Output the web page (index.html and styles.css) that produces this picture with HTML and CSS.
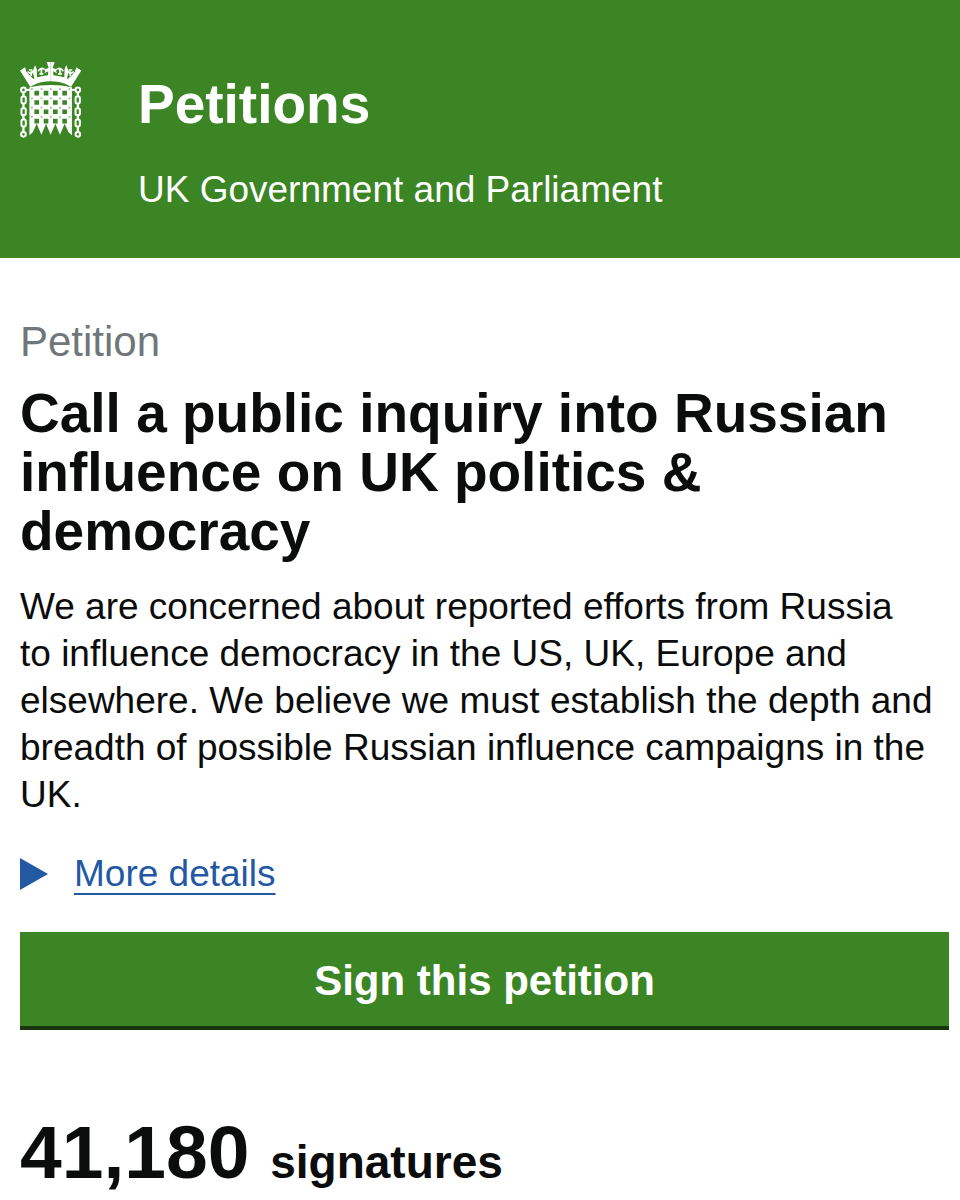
FILE: index.html
```html
<!DOCTYPE html>
<html lang="en">
<head>
  <meta charset="UTF-8">
  <meta name="viewport" content="width=device-width, initial-scale=1.0">
  <title>Petitions</title>
  <link rel="stylesheet" href="styles.css">
</head>
<body>
  <header class="header">
    <svg class="crest" viewBox="30 18 183 229" aria-hidden="true">
      <!-- crown -->
      <g id="crown-half">
        <path fill="#fff" d="M30 44l12-7 5 8 9 11 14 13q24-11 52-11v18q-30 0-53 12l-8 5z"/>
        <path fill="#fff" d="M30 44l15-10 3 10-9 6zM110 18h12v44h-9l2-16-12 6 5-13 8-4z"/>
        <path fill="#fff" d="M75 27l5 13 1 26-8 4-5-24z"/>
        <path fill="none" stroke="#fff" stroke-width="5" d="M52 47l11 7 8-10M63 46v14M84 46q10-14 18-6M94 40v14M88 54h12M103 40l8 4M57 42l10 0"/>
      </g>
      <use href="#crown-half" transform="matrix(-1 0 0 1 244 0)"/>
      <!-- portcullis -->
      <path fill="#fff" d="M58 94q64-14 128 0v145l-10-9-12-26-14 33-14-33-14 33-14-33-14 33-14-33-12 26-10 9z"/>
      <g fill="#3b8524">
        <path id="holes" d="M73 105h14v14H73zM101 105h14v14h-14zM129 105h14v14h-14zM157 105h14v14h-14z"/>
        <use href="#holes" y="28"/>
        <use href="#holes" y="56"/>
        <use href="#holes" y="84"/>
      </g>
      <g fill="#8fbb80">
        <path id="rivets" d="M63 97h5v5h-5zM92 97h5v5h-5zM120 97h5v5h-5zM148 97h5v5h-5zM176 97h5v5h-5z"/>
        <use href="#rivets" y="28"/>
        <use href="#rivets" y="56"/>
        <use href="#rivets" y="84"/>
      </g>
      <!-- chains -->
      <g id="chain" fill="none" stroke="#fff" stroke-width="6">
        <circle cx="40" cy="102" r="7"/>
        <rect x="34" y="122" width="13" height="21" rx="5"/>
        <rect x="34" y="157" width="13" height="21" rx="5"/>
        <rect x="34" y="191" width="13" height="21" rx="5"/>
        <circle cx="40" cy="236" r="7"/>
        <path stroke-width="7" d="M40 109v14M40 143v14M40 178v13M40 212v17"/>
        <path d="M47 102h14"/>
      </g>
      <use href="#chain" transform="matrix(-1 0 0 1 244 0)"/>
    </svg>
    <div class="header-text">
      <a class="site-title" href="#">Petitions</a>
      <p class="tagline">UK Government and Parliament</p>
    </div>
  </header>

  <main class="content">
    <p class="context">Petition</p>
    <h1>Call a public inquiry into Russian influence on UK politics &amp; democracy</h1>
    <p class="background">We are concerned about reported efforts from Russia to&nbsp;influence democracy in the US, UK, Europe and elsewhere. We believe we must establish the depth and breadth of possible Russian influence campaigns in the UK.</p>

    <details class="more">
      <summary>
        <svg class="arrow" viewBox="0 0 28 32" aria-hidden="true"><path fill="#2358a3" d="M0 0l28 16L0 32z"/></svg>
        <span class="more-label">More details</span>
      </summary>
    </details>

    <button class="sign-btn" type="button">Sign this petition</button>

    <p class="count"><span class="count-number">41,180</span> signatures</p>
  </main>
</body>
</html>
```
FILE: styles.css
```css
body {
  margin: 0;
  background-color: #fff;
  color: #0b0c0c;
  font-family: "Helvetica Neue", "Liberation Sans", Arial, sans-serif;
  font-size: 37px;
  line-height: 47px;
}

p, h1 {
  margin: 0;
}

.header {
  display: flex;
  align-items: flex-start;
  gap: 57px;
  padding: 62px 20px 44px;
  background-color: #3b8524;
  color: #fff;
}

.crest {
  flex: none;
  width: 61px;
  height: 76px;
}

.header-text {
  padding-top: 10px;
}

.site-title {
  display: block;
  color: #fff;
  font-size: 55px;
  font-weight: bold;
  line-height: 64px;
  text-decoration: none;
}

.tagline {
  margin-top: 30px;
  line-height: 48px;
}

.content {
  padding: 60px 11px 20px 20px;
}

.context {
  color: #6f777b;
  font-size: 42px;
  line-height: 48px;
}

h1 {
  margin-top: 18px;
  font-size: 55px;
  line-height: 59px;
}

.background {
  margin-top: 22px;
}

.more {
  margin-top: 32px;
  color: #2358a3;
  line-height: 48px;
}

.more summary {
  display: flex;
  align-items: center;
  gap: 26px;
  list-style: none;
  cursor: pointer;
}

.arrow {
  width: 28px;
  height: 32px;
}

.more-label {
  text-decoration: underline;
  text-decoration-thickness: 2px;
  text-underline-offset: 7px;
}

.sign-btn {
  display: block;
  width: 100%;
  margin-top: 34px;
  padding: 22px 20px 18px;
  border: 0;
  border-bottom: 4px solid #17360e;
  background-color: #3b8524;
  color: #fff;
  font-family: inherit;
  font-size: 42px;
  font-weight: bold;
  line-height: 54px;
  cursor: pointer;
}

.count {
  margin-top: 80px;
  font-size: 46px;
  font-weight: bold;
  line-height: 84px;
}

.count-number {
  margin-right: 8px;
  font-size: 75px;
}
```
